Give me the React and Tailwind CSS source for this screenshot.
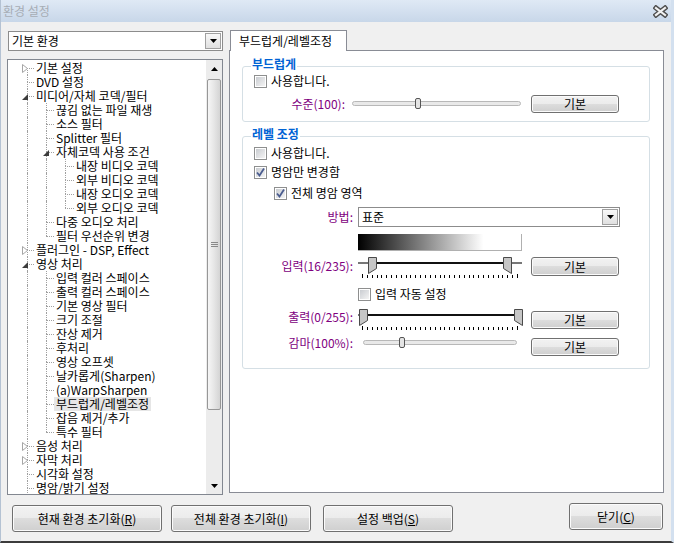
const FONT = "font-['Noto_Sans_CJK_KR','Noto_Sans',sans-serif]";

const TREE = [
  [0, "기본 설정", "c"],
  [0, "DVD 설정"],
  [0, "미디어/자체 코덱/필터", "e"],
  [1, "끊김 없는 파일 재생"],
  [1, "소스 필터"],
  [1, "Splitter 필터"],
  [1, "자체코덱 사용 조건", "e"],
  [2, "내장 비디오 코덱"],
  [2, "외부 비디오 코덱"],
  [2, "내장 오디오 코덱"],
  [2, "외부 오디오 코덱"],
  [1, "다중 오디오 처리"],
  [1, "필터 우선순위 변경"],
  [0, "플러그인 - DSP, Effect", "c"],
  [0, "영상 처리", "e"],
  [1, "입력 컬러 스페이스"],
  [1, "출력 컬러 스페이스"],
  [1, "기본 영상 필터"],
  [1, "크기 조절"],
  [1, "잔상 제거"],
  [1, "후처리"],
  [1, "영상 오프셋"],
  [1, "날카롭게(Sharpen)"],
  [1, "(a)WarpSharpen"],
  [1, "부드럽게/레벨조정", null, true],
  [1, "잡음 제거/추가"],
  [1, "특수 필터"],
  [0, "음성 처리", "c"],
  [0, "자막 처리", "c"],
  [0, "시각화 설정"],
  [0, "명암/밝기 설정"],
];

// does the branch at level l keep going below row i
const continues = (i, l) => {
  for (let j = i + 1; j < TREE.length; j++) {
    if (TREE[j][0] < l) return false;
    if (TREE[j][0] === l) return true;
  }
  return l === 0;
};

const LINE_X = ["left-[19px]", "left-[38px]", "left-[57px]"];
const HOR_W = ["w-[7px]", "w-[8px]", "w-[9px]"];
const TEXT_PL = ["pl-[26px]", "pl-[46px]", "pl-[66px]"];
const EXP_X = ["left-[14px]", "left-[35px]", "left-[54px]"];
const DOT = "absolute border-dotted border-[#a0a0a0]";

const TreeRow = ({ i }) => {
  const [level, label, exp, selected] = TREE[i];
  const guides = [];
  for (let l = 0; l < level; l++) {
    if (continues(i, l))
      guides.push(<span key={l} className={`${DOT} top-0 h-[14px] border-l ${LINE_X[l]}`} />);
  }
  return (
    <div className={`relative h-[14px] flex items-center whitespace-nowrap ${TEXT_PL[level]}`}>
      {guides}
      {i > 0 && <span className={`${DOT} top-0 h-[7px] border-l ${LINE_X[level]}`} />}
      {continues(i, level) && <span className={`${DOT} top-[7px] h-[7px] border-l ${LINE_X[level]}`} />}
      <span className={`${DOT} top-[7px] h-0 border-t ${LINE_X[level]} ${HOR_W[level]}`} />
      {exp === "c" && (
        <svg width="6" height="9" className={`absolute top-[3px] ${EXP_X[level]}`}>
          <path d="M0.5 0.5 L5.5 4.5 L0.5 8.5 Z" fill="#fff" stroke="#a6a6a6" />
        </svg>
      )}
      {exp === "e" && (
        <svg width="6" height="6" className={`absolute top-[5px] ${EXP_X[level]}`}>
          <path d="M6 0 L6 6 L0 6 Z" fill="#3c3c3c" />
        </svg>
      )}
      <span className={"px-[2px] leading-[14px] " + (selected ? "bg-[#e6e6e6]" : "")}>{label}</span>
    </div>
  );
};

const Arrow = ({ up }) => (
  <svg width="7" height="4">
    <path d={up ? "M0 4H7L3.5 0Z" : "M0 0H7L3.5 4Z"} fill="#000" />
  </svg>
);

const Combo = ({ text, className }) => (
  <div className={"flex items-center justify-between bg-white border border-[#8c8c8c] pl-[3px] pr-[1px] " + className}>
    <span className="leading-[14px]">{text}</span>
    <span className="w-[16px] h-[16px] border border-[#a0a0a0] bg-[linear-gradient(#f8f8f8,#e0e0e0)] flex items-center justify-center">
      <Arrow />
    </span>
  </div>
);

const Btn = ({ className, children }) => (
  <div
    className={
      "flex items-center justify-center shrink-0 rounded-[3px] border border-[#707070] shadow-[inset_0_0_0_1px_#fbfbfb] bg-[linear-gradient(#f2f2f2_0%,#ebebeb_50%,#dddddd_50%,#cfcfcf_100%)] leading-[14px] " +
      className
    }
  >
    {children}
  </div>
);

const Check = ({ checked, text, className }) => (
  <div className={"flex items-center h-[16px] " + (className || "")}>
    <span className="w-[13px] h-[13px] border border-[#8e8f8f] bg-white p-[1px] flex shrink-0">
      <span className="flex-1 bg-[linear-gradient(135deg,#c9ccd1,#f4f4f4)] flex items-center justify-center">
        {checked && (
          <svg width="9" height="9">
            <path d="M1 4.5 L3.5 7.5 L8 0.5" fill="none" stroke="#4a5c8f" strokeWidth="1.8" />
          </svg>
        )}
      </span>
    </span>
    <span className="ml-[4px] leading-[14px]">{text}</span>
  </div>
);

const Slider = ({ width, height, from, to, thumb }) => {
  const cy = height / 2;
  return (
    <svg width={width} height={height} className="shrink-0">
      <rect x={from + 0.5} y={cy - 2.5} width={to - from - 1} height="4" rx="2" fill="#e9e9e9" stroke="#b8b8b8" />
      <rect x={thumb - 2.5} y={cy - 5.5} width="5" height="10" rx="1.5" fill="#e4e4e4" stroke="#555" />
    </svg>
  );
};

const RangeSlider = ({ lo, hi }) => {
  const ticks = [];
  for (let k = 0; k <= 32; k++) {
    const x = Math.round(5 + (k * 155) / 32) + 0.5;
    ticks.push(
      <line key={k} x1={x} x2={x} y1={k === 0 || k === 32 ? 19 : 20} y2="23" stroke="#000" />
    );
  }
  return (
    <svg width="166" height="26" className="shrink-0">
      <line x1="1" x2="165" y1="8" y2="8" stroke="#777" strokeWidth="2" />
      <line x1={lo + 4} x2={hi + 4} y1="8" y2="8" stroke="#111" strokeWidth="2" />
      <path d={`M${lo + 0.5} 2.5 h8 v11 l-8 5 z`} fill="#c6c6c6" stroke="#4a4a4a" />
      <path d={`M${hi + 0.5} 2.5 h8 v16 l-8 -5 z`} fill="#c6c6c6" stroke="#4a4a4a" />
      {ticks}
    </svg>
  );
};

const Group = ({ title, className, children }) => (
  <div className={"relative border border-[#d5dfe5] rounded-[3px] " + className}>
    <span className="absolute left-[8px] -top-[10px] px-[1px] bg-white font-bold text-[#0063d4] leading-[14px]">
      {title}
    </span>
    {children}
  </div>
);

const Label = ({ className, children }) => (
  <span className={"shrink-0 text-right text-[#800080] leading-[14px] " + className}>{children}</span>
);

export default function App() {
  return (
    <div
      className={`w-[674px] h-[543px] flex flex-col bg-[#f0f0f0] border-l border-l-[#b4c2d3] border-r-[3px] border-r-[#d3e0ef] border-b-2 border-b-[#3c3c3c] text-[12px] text-black overflow-hidden ${FONT}`}
    >
      <div className="h-[22px] shrink-0 flex items-center justify-between pl-[2px] pr-[3px] bg-[linear-gradient(#dfe9f5,#c8d7e9)]">
        <span className="text-[#a7adb5] leading-[14px]">환경 설정</span>
        <svg width="15" height="13">
          <path d="M3 3 L12 10 M12 3 L3 10" stroke="#505050" strokeWidth="5" strokeLinecap="square" />
          <path d="M3 3 L12 10 M12 3 L3 10" stroke="#f2f2f2" strokeWidth="2.2" strokeLinecap="square" />
        </svg>
      </div>

      <div className="flex items-start pt-[8px] pl-[6px]">
        <div className="w-[216px] mt-[1px] flex flex-col">
          <Combo text="기본 환경" className="ml-[1px] w-[215px] h-[20px]" />
          <div className="mt-[8px] h-[436px] border border-[#828790] bg-white flex">
            <div className="flex-1 pt-[1px] overflow-hidden">
              {TREE.map((_, i) => (
                <TreeRow key={i} i={i} />
              ))}
            </div>
            <div className="w-[16px] flex flex-col bg-[#ececec]">
              <div className="h-[17px] flex items-center justify-center">
                <Arrow up />
              </div>
              <div className="flex-1 px-[1px]">
                <div className="mt-[2px] h-[331px] rounded-[2px] border border-[#979797] bg-[linear-gradient(to_right,#f6f6f6,#e6e6e6_50%,#d4d4d4)] flex flex-col items-center justify-center gap-[1px]">
                  <span className="w-[7px] h-px bg-[#8a8a8a]" />
                  <span className="w-[7px] h-px bg-[#8a8a8a]" />
                  <span className="w-[7px] h-px bg-[#8a8a8a]" />
                </div>
              </div>
              <div className="h-[17px] flex items-center justify-center">
                <Arrow />
              </div>
            </div>
          </div>
        </div>

        <div className="ml-[6px] w-[435px] flex flex-col">
          <div className="self-start ml-[1px] w-[117px] h-[21px] -mb-px relative z-10 bg-white border border-b-0 border-[#898c95] pl-[8px] flex items-center leading-[14px]">
            부드럽게/레벨조정
          </div>
          <div className="h-[443px] border border-[#898c95] bg-white pl-[12px] flex flex-col">
            <Group title="부드럽게" className="mt-[15px] w-[408px] pt-[6px] pb-[8px]">
              <Check text="사용합니다." className="ml-[11px]" />
              <div className="mt-[6px] flex items-center h-[18px]">
                <Label className="w-[102px]">수준(100):</Label>
                <span className="ml-[7px] flex">
                  <Slider width={169} height={18} from={0} to={169} thumb={66} />
                </span>
                <Btn className="ml-[10px] w-[88px] h-[18px]">기본</Btn>
              </div>
            </Group>

            <Group title="레벨 조정" className="mt-[14px] w-[408px] pt-[8px] pb-[12px]">
              <Check text="사용합니다." className="ml-[11px]" />
              <Check checked text="명암만 변경함" className="ml-[11px] mt-[3px]" />
              <Check checked text="전체 명암 영역" className="ml-[31px] mt-[5px]" />
              <div className="mt-[6px] flex items-center h-[20px]">
                <Label className="w-[110px]">방법:</Label>
                <Combo text="표준" className="ml-[5px] w-[262px] h-[20px]" />
              </div>
              <div className="mt-[7px] ml-[115px] w-[164px] h-[17px] border-r border-b border-[#b0b0b0] bg-[linear-gradient(to_right,#000_0%,#fff_77%,#fff_100%)]" />
              <div className="mt-[4px] flex items-start">
                <Label className="w-[110px] mt-[4px]">입력(16/235):</Label>
                <span className="ml-[4px] flex">
                  <RangeSlider lo={11} hi={146} />
                </span>
                <Btn className="ml-[8px] mt-[2px] w-[88px] h-[19px]">기본</Btn>
              </div>
              <Check text="입력 자동 설정" className="ml-[115px] mt-[5px]" />
              <div className="mt-[5px] flex items-start">
                <Label className="w-[110px] mt-[3px]">출력(0/255):</Label>
                <span className="ml-[4px] flex">
                  <RangeSlider lo={2} hi={157} />
                </span>
                <Btn className="ml-[8px] mt-[4px] w-[88px] h-[18px]">기본</Btn>
              </div>
              <div className="mt-[3px] flex items-start">
                <Label className="w-[110px]">감마(100%):</Label>
                <span className="ml-[5px] flex">
                  <Slider width={164} height={14} from={5} to={159} thumb={44} />
                </span>
                <Btn className="ml-[9px] mt-[2px] w-[88px] h-[18px]">기본</Btn>
              </div>
            </Group>
          </div>
        </div>
      </div>

      <div className="flex items-start mt-[10px] pl-[11px]">
        <Btn className="w-[150px] h-[27px]">
          현재 환경 초기화(<u>R</u>)
        </Btn>
        <Btn className="ml-[9px] w-[140px] h-[27px]">
          전체 환경 초기화(<u>I</u>)
        </Btn>
        <Btn className="ml-[12px] w-[130px] h-[27px]">
          설정 백업(<u>S</u>)
        </Btn>
        <Btn className="ml-[116px] -mt-[2px] w-[94px] h-[27px]">
          닫기(<u>C</u>)
        </Btn>
      </div>
    </div>
  );
}
